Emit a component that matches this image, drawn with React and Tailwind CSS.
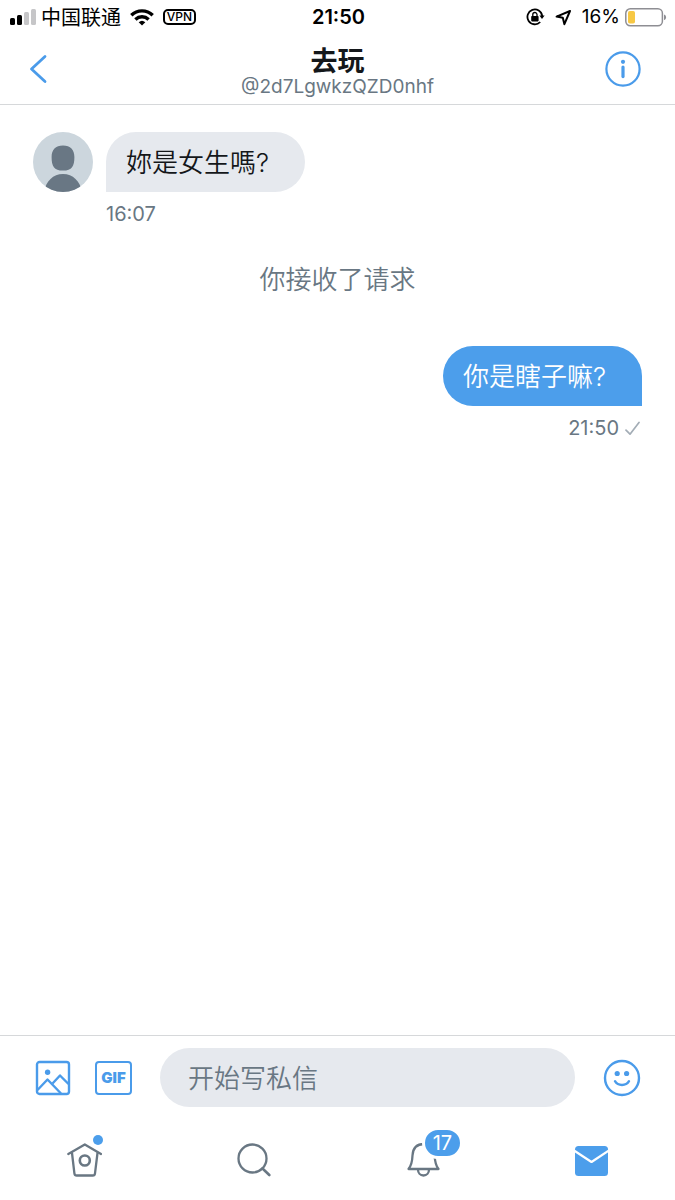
import React from 'react';

const messages = [
  { id: 1, type: 'received', text: '妳是女生嗎?', time: '16:07' },
  { id: 2, type: 'notice', text: '你接收了请求' },
  { id: 3, type: 'sent', text: '你是瞎子嘛?', time: '21:50' },
];

const StatusBar = () => (
  <div className="grid h-[34px] grid-cols-[1fr_auto_1fr] items-center pl-[10px] pr-2 text-[19px] leading-6 text-black">
    <div className="flex items-center">
      <svg width="26" height="16" viewBox="0 0 26 16" aria-hidden="true">
        <rect x="0" y="9" width="5" height="7" rx="1.5" />
        <rect x="7" y="6" width="5" height="10" rx="1.5" />
        <rect x="14" y="3" width="5" height="13" rx="1.5" fill="#c6c6c8" />
        <rect x="21" y="0" width="5" height="16" rx="1.5" fill="#c6c6c8" />
      </svg>
      <span className="ml-[5px] pt-[2px] text-[20px]">中国联通</span>
      <svg className="ml-[9px]" width="24" height="17" viewBox="0 0 24 17" fill="none" stroke="#000" strokeWidth="3.4" aria-hidden="true">
        <path d="M1.3 6.2a15.5 15.5 0 0 1 21.4 0" />
        <path d="M5.4 10.4a9.6 9.6 0 0 1 13.2 0" />
        <path d="M12 16.6l-3.3-3.4a4.9 4.9 0 0 1 6.6 0z" fill="#000" stroke="none" />
      </svg>
      <span className="ml-[9px] flex h-4 w-[33px] items-center justify-center rounded-[5px] border-2 border-black text-[12px] font-medium leading-3">
        VPN
      </span>
    </div>
    <span className="text-[20px] font-semibold">21:50</span>
    <div className="flex items-center justify-end">
      <svg width="19" height="18" viewBox="0 0 19 18" fill="none" stroke="#000" strokeWidth="1.8" aria-hidden="true">
        <path d="M14.2 14A7.4 7.4 0 1 1 16.2 8" />
        <path d="M13.4 7.6h5.2l-2.6 3.4z" fill="#000" stroke="none" />
        <rect x="5.2" y="8" width="7.4" height="5.4" rx="0.8" fill="#000" stroke="none" />
        <path d="M6.8 8.4V6.6a2.1 2.1 0 0 1 4.2 0v1.8" strokeWidth="1.3" />
      </svg>
      <svg className="ml-[10px]" width="17" height="17" viewBox="0 0 17 17" fill="none" stroke="#000" strokeWidth="2" strokeLinejoin="round" aria-hidden="true">
        <path d="M15 2L1.6 7.6l6.2 1.2 1.6 6.4z" />
      </svg>
      <span className="ml-[10px]">16%</span>
      <svg className="ml-[5px]" width="42" height="19" viewBox="0 0 42 19" aria-hidden="true">
        <rect x="0.8" y="0.8" width="36.6" height="17" rx="4.5" fill="none" stroke="#8e8e93" strokeWidth="1.5" />
        <rect x="3" y="3" width="7" height="12.6" rx="1.8" fill="#f7c844" />
        <path d="M39 6.5c2.8.6 2.8 5 0 5.6z" fill="#8e8e93" />
      </svg>
    </div>
  </div>
);

const ChatHeader = () => (
  <header className="grid h-[71px] grid-cols-[1fr_auto_1fr] items-center border-b border-[#d6d8da] px-[29px]">
    <button type="button" aria-label="返回" className="justify-self-start">
      <svg width="18" height="30" viewBox="0 0 18 30" fill="none" stroke="#4a9bea" strokeWidth="2.8" strokeLinecap="round" strokeLinejoin="round">
        <path d="M16 2.5L2.5 15L16 27.5" />
      </svg>
    </button>
    <div className="flex flex-col items-center pt-[2px]">
      <h1 className="pt-[2px] text-[27px] font-bold leading-8 text-[#14171a]">去玩</h1>
      <p className="text-[19px] leading-[18px] text-[#697783]">@2d7LgwkzQZD0nhf</p>
    </div>
    <button type="button" aria-label="信息" className="mr-[5px] justify-self-end">
      <svg width="36" height="36" viewBox="0 0 36 36" fill="none" stroke="#4a9bea">
        <circle cx="18" cy="18" r="16.6" strokeWidth="2.2" />
        <path d="M18 16v9.6" strokeWidth="3.2" strokeLinecap="round" />
        <circle cx="18" cy="10.8" r="2.1" fill="#4a9bea" stroke="none" />
      </svg>
    </button>
  </header>
);

const Avatar = () => (
  <svg className="shrink-0" width="60" height="60" viewBox="0 0 60 60" role="img" aria-label="头像">
    <clipPath id="avatar-clip">
      <circle cx="30" cy="30" r="30" />
    </clipPath>
    <g clipPath="url(#avatar-clip)">
      <rect width="60" height="60" fill="#ccd6dd" />
      <path d="M30 13.5c7.5 0 11.4 4.4 11.4 11.4 0 9.2-2.4 13.6-11.4 13.6s-11.4-4.4-11.4-13.6c0-7 3.9-11.4 11.4-11.4z" fill="#697784" />
      <path d="M11 60c2-11 9-18 19-18s17 7 19 18z" fill="#697784" />
    </g>
  </svg>
);

const Message = ({ message }) => {
  if (message.type === 'notice') {
    return <p className="mt-[34px] text-center text-[26px] font-[350] leading-10 text-[#697783]">{message.text}</p>;
  }

  if (message.type === 'sent') {
    return (
      <div className="mt-[46px] flex flex-col items-end">
        <p className="rounded-[30px] rounded-br-none bg-[#4c9eeb] pb-[9px] pl-5 pr-9 pt-[11px] text-[26px] font-[350] leading-10 text-white">
          {message.text}
        </p>
        <div className="mt-[10px] flex items-center gap-[6px] pr-[2px] text-[20px] leading-6 text-[#697783]">
          <time>{message.time}</time>
          <svg width="15" height="15" viewBox="0 0 15 15" fill="none" stroke="#a3adb6" strokeWidth="1.7" strokeLinecap="round" strokeLinejoin="round" role="img" aria-label="已发送">
            <path d="M1 9.2l4 4L14 1.5" />
          </svg>
        </div>
      </div>
    );
  }

  return (
    <div className="flex items-start gap-[13px]">
      <Avatar />
      <div>
        <p className="rounded-[30px] rounded-bl-none bg-[#e6e9ee] pb-[9px] pl-5 pr-9 pt-[11px] text-[26px] font-[350] leading-10 text-[#14171a]">
          {message.text}
        </p>
        <time className="mt-[10px] block text-[20px] leading-6 text-[#697783]">{message.time}</time>
      </div>
    </div>
  );
};

const Composer = () => (
  <form className="flex items-center border-t border-[#d6d8da] pb-[13px] pl-[35px] pr-[34px] pt-3" onSubmit={(e) => e.preventDefault()}>
    <button type="button" aria-label="添加照片">
      <svg width="36" height="36" viewBox="0 0 36 36" fill="none" stroke="#4a9bea" strokeWidth="2.4" strokeLinejoin="round">
        <rect x="2" y="2" width="32" height="32" rx="2.5" />
        <circle cx="12.6" cy="12.2" r="2.7" fill="#4a9bea" stroke="none" />
        <path d="M2.5 30L12.5 19.5l13.5 14" />
        <path d="M17.5 23.5L25 15.5L33.5 24" />
      </svg>
    </button>
    <button
      type="button"
      aria-label="GIF"
      className="ml-6 flex h-[34px] w-[37px] shrink-0 items-center justify-center rounded-[4px] border-2 border-[#4a9bea] text-[15px] font-black leading-5 text-[#4a9bea]"
    >
      GIF
    </button>
    <input
      type="text"
      aria-label="开始写私信"
      placeholder="开始写私信"
      className="ml-7 h-[59px] min-w-0 flex-1 rounded-full bg-[#e6e9ee] px-7 pt-[2px] text-[26px] font-[350] text-[#14171a] outline-none placeholder:text-[#697783]"
    />
    <button type="button" aria-label="表情" className="ml-7">
      <svg width="38" height="38" viewBox="0 0 38 38" fill="none" stroke="#4a9bea" strokeWidth="2.4" strokeLinecap="round">
        <circle cx="19" cy="19" r="17" />
        <circle cx="14.2" cy="14.5" r="2.6" fill="#4a9bea" stroke="none" />
        <circle cx="23.6" cy="14.5" r="2.6" fill="#4a9bea" stroke="none" />
        <path d="M12 22.2c3 5 11 5 14 0" />
      </svg>
    </button>
  </form>
);

const TabBar = () => (
  <nav className="grid h-20 grid-cols-4 items-center justify-items-center">
    <a href="#home" aria-label="主页" className="relative">
      <svg width="36" height="36" viewBox="0 0 36 36" fill="none" stroke="#697783" strokeWidth="2.3" strokeLinecap="round" strokeLinejoin="round">
        <path d="M2.3 12L18.8 2.5L35 12" />
        <path d="M6 11l2.4 20.3c.2 1.5.9 2.200 2.300 2.200h16c1.400 0 2.100-.7 2.300-2.200L31.500 11" />
        <circle cx="18.8" cy="18.500" r="5" strokeWidth="2.6" />
      </svg>
      <span className="absolute -right-px -top-[7px] size-[10px] rounded-full bg-[#4c9eeb]" />
    </a>
    <a href="#search" aria-label="搜索">
      <svg width="36" height="36" viewBox="0 0 36 36" fill="none" stroke="#697783" strokeWidth="2.3" strokeLinecap="round">
        <circle cx="17.5" cy="16.5" r="14" />
        <path d="M27.5 26.5l6.8 6.5" strokeWidth="2.6" />
      </svg>
    </a>
    <a href="#notifications" aria-label="通知" className="relative">
      <svg width="36" height="36" viewBox="0 0 36 36" fill="none" stroke="#697783" strokeWidth="2.3" strokeLinejoin="round">
        <path d="M20 2C11.500 2 8.800 7.500 8.500 13.500c-.3 7-1 10-4 13.500h30c-2.500-3-3.500-6-3.900-13.500C30.300 7.500 27 2 20 2z" />
        <path d="M14 27.500c0 3.500 2.300 6 5.500 6s5.500-2.500 5.500-6" />
      </svg>
      <span className="absolute -right-[23px] -top-[15px] flex h-8 min-w-[41px] items-center justify-center rounded-full border-[3px] border-white bg-[#4c9eeb] text-[20px] leading-6 text-white">
        17
      </span>
    </a>
    <a href="#messages" aria-label="私信" aria-current="page">
      <svg width="36" height="36" viewBox="0 0 36 36">
        <rect x="2" y="4" width="33" height="30" rx="3.5" fill="#4c9eeb" />
        <path d="M1 8.5L18.5 20L36 8.5" fill="none" stroke="#fff" strokeWidth="2.2" strokeLinejoin="round" />
      </svg>
    </a>
  </nav>
);

const App = () => {
  return (
    <div className="flex min-h-screen flex-col bg-white font-['Inter','Noto_Sans_CJK_SC',sans-serif]">
      <StatusBar />
      <ChatHeader />
      <main className="flex-1 px-[33px] pb-6 pt-[27px]">
        {messages.map((message) => (
          <Message key={message.id} message={message} />
        ))}
      </main>
      <Composer />
      <TabBar />
    </div>
  );
};

export default App;
